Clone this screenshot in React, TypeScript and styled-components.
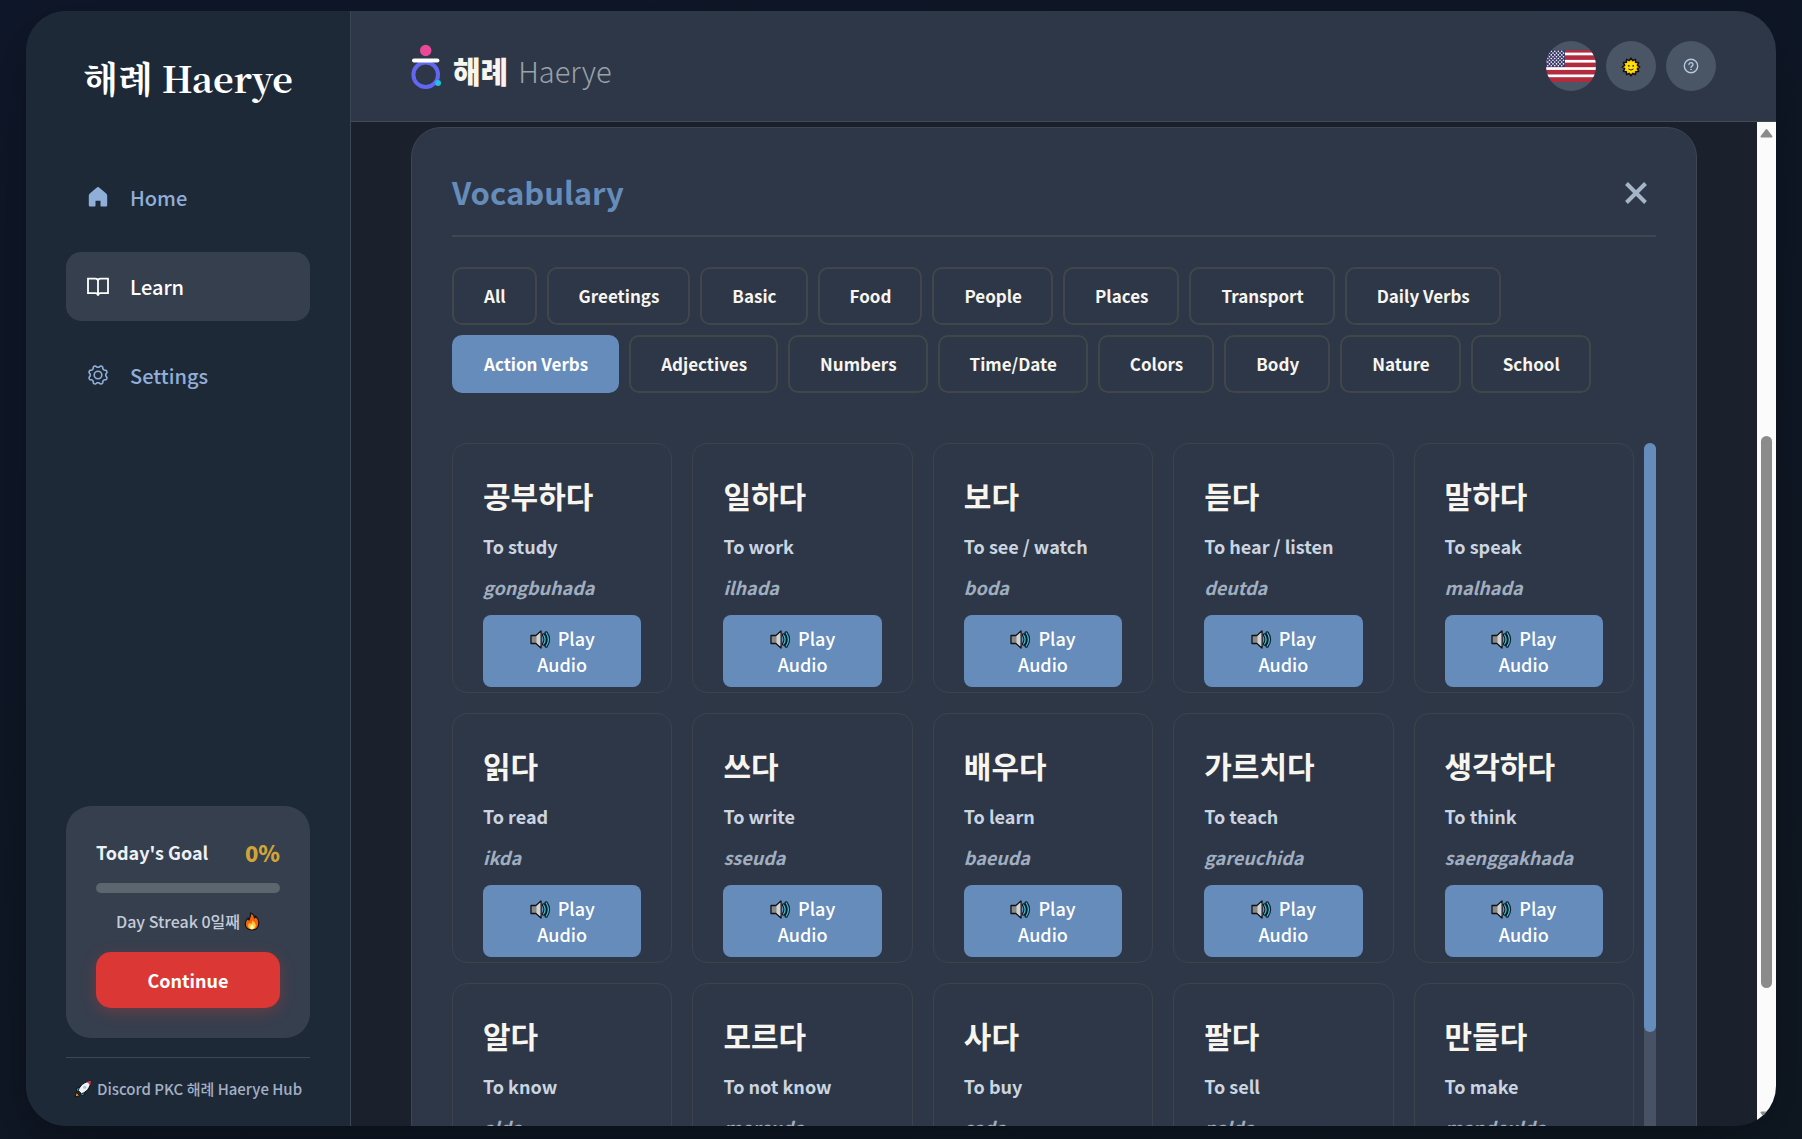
import React, { useState } from "react";
import styled, { createGlobalStyle, css } from "styled-components";

const GlobalStyle = createGlobalStyle`
  *, *::before, *::after { box-sizing: border-box; }
  body {
    margin: 0;
    color: #f7f5ee;
    background: linear-gradient(160deg, #0f172a 0%, #0f1822 100%);
    font-family: "Noto Sans CJK KR", "Noto Sans", sans-serif;
    font-size: 18px;
    line-height: 26px;
  }
  button { font-family: inherit; cursor: pointer; border: 0; margin: 0; padding: 0; }
  h1, h2, h3, p, ul { margin: 0; padding: 0; }
`;

const Stage = styled.div`
  height: 100vh;
  padding: 11px 26px 13px;
`;

const Shell = styled.div`
  display: flex;
  height: 100%;
  overflow: hidden;
  border-radius: 40px;
  background: #1a202c;
  box-shadow: 0 20px 60px rgba(0, 0, 0, 0.3);
`;

/* ---------- Sidebar ---------- */

const Sidebar = styled.aside`
  display: flex;
  flex-direction: column;
  flex: 0 0 325px;
  padding: 40px 40px 24px;
  background: #1e2938;
  border-right: 1px solid #3b4553;
`;

const Brand = styled.h1`
  color: #fff;
  font-family: "Noto Serif CJK KR", "Liberation Serif", serif;
  font-size: 36px;
  font-weight: 700;
  line-height: 54px;
  text-align: center;
  white-space: nowrap;
`;

const Nav = styled.nav`
  display: flex;
  flex-direction: column;
  gap: 20px;
  margin-top: 58px;
`;

const NavLink = styled.a<{ $active?: boolean }>`
  display: flex;
  align-items: center;
  gap: 20px;
  height: 69px;
  padding: 0 20px;
  border-radius: 15px;
  color: ${(p) => (p.$active ? "#fff" : "#90afd8")};
  background: ${(p) => (p.$active ? "#363f4e" : "transparent")};
  font-size: 20px;
  font-weight: 500;
  text-decoration: none;
`;

const GoalCard = styled.section`
  display: flex;
  flex-direction: column;
  margin-top: auto;
  padding: 30px;
  border-radius: 25px;
  background: #363f4e;
`;

const GoalHead = styled.div`
  display: flex;
  align-items: center;
  justify-content: space-between;
  height: 32px;
`;

const GoalTitle = styled.h3`
  color: #edf0f4;
  font-size: 18px;
  font-weight: 700;
`;

const GoalValue = styled.span`
  color: #d2a438;
  font-size: 22px;
  font-weight: 900;
`;

const GoalBar = styled.div`
  height: 10px;
  margin-top: 15px;
  border-radius: 5px;
  background: #5d656f;
`;

const Streak = styled.p`
  display: flex;
  align-items: center;
  justify-content: center;
  gap: 4px;
  margin: 15px 0 18px;
  color: #c3cbd9;
  font-size: 16px;
  font-weight: 500;
`;

const ContinueButton = styled.button`
  height: 56px;
  border-radius: 15px;
  background: #db3735;
  box-shadow: 0 4px 15px rgba(219, 55, 53, 0.3);
  color: #fff;
  font-size: 18px;
  font-weight: 700;
`;

const SidebarFoot = styled.footer`
  margin-top: 19px;
  padding-top: 18px;
  border-top: 1px solid #3f4650;
`;

const FootLink = styled.a`
  display: flex;
  align-items: center;
  justify-content: center;
  gap: 5px;
  color: #a3b0c5;
  font-size: 15px;
  font-weight: 500;
  white-space: nowrap;
  text-decoration: none;
`;

/* ---------- Header ---------- */

const Content = styled.div`
  display: flex;
  flex: 1;
  flex-direction: column;
  min-width: 0;
`;

const Header = styled.header`
  display: flex;
  flex: none;
  align-items: flex-start;
  justify-content: space-between;
  padding: 30px 60px;
  height: 111px;
  border-bottom: 1px solid #434a53;
  background: #2d3748;
`;

const Logo = styled.a`
  display: flex;
  align-items: flex-start;
  gap: 10px;
  color: #f7f5ee;
  line-height: 58px;
  text-decoration: none;
`;

const LogoKorean = styled.span`
  font-size: 30px;
  font-weight: 900;
`;

const LogoLatin = styled.span`
  color: #9aa1a9;
  font-size: 29px;
  font-weight: 300;
`;

const Actions = styled.div`
  display: flex;
  gap: 10px;
`;

const RoundButton = styled.button`
  display: grid;
  place-items: center;
  width: 50px;
  height: 50px;
  overflow: hidden;
  border-radius: 50%;
  background: #4a5565;
  color: #b4c8de;
`;

/* ---------- Page ---------- */

const Scroller = styled.div`
  display: flex;
  flex: 1;
  min-height: 0;
`;

const Page = styled.main`
  flex: 1;
  min-width: 0;
  overflow: hidden;
  padding: 5px 60px 0;
`;

const Panel = styled.section`
  padding: 40px;
  border: 1px solid #3f464f;
  border-radius: 30px;
  background: #2d3748;
`;

const PanelHead = styled.div`
  display: flex;
  align-items: flex-end;
  justify-content: space-between;
  padding: 0 8px 20px 0;
  border-bottom: 2px solid #41474e;
`;

const PanelTitle = styled.h2`
  color: #668cbb;
  font-size: 31px;
  font-weight: 700;
  line-height: 47px;
`;

const CloseButton = styled.button`
  display: grid;
  place-items: center;
  width: 24px;
  height: 44px;
  background: none;
  color: #a5b4c6;
`;

const Tabs = styled.div`
  display: flex;
  flex-wrap: wrap;
  gap: 10px;
  margin-top: 30px;
`;

const Tab = styled.button<{ $active?: boolean }>`
  padding: 15px 29px 15px 30px;
  border: 2px solid #40464a;
  border-radius: 10px;
  background: transparent;
  color: #f7f5ee;
  font-size: 17px;
  font-weight: 700;
  line-height: 24px;
  ${(p) =>
    p.$active &&
    css`
      border-color: #668cbb;
      background: #668cbb;
      color: #fff;
    `}
`;

const WordArea = styled.div`
  display: flex;
  gap: 10px;
  height: 800px;
  margin-top: 50px;
`;

const WordGrid = styled.div`
  display: grid;
  flex: 1;
  grid-template-columns: repeat(auto-fill, minmax(210px, 1fr));
  grid-auto-rows: 250px;
  gap: 20px;
  min-width: 0;
  overflow: hidden;
`;

const Word = styled.article`
  display: flex;
  flex-direction: column;
  gap: 15px;
  padding: 30px;
  border: 1px solid #3c444a;
  border-radius: 15px;
  min-width: 0;
`;

const Hangul = styled.h3`
  margin-bottom: 2px;
  font-size: 30px;
  font-weight: 700;
  line-height: 42px;
`;

const Meaning = styled.p`
  color: #cbd5e0;
  font-weight: 600;
`;

const Romanized = styled.p`
  color: #a0aec0;
  font-style: italic;
  font-weight: 600;
`;

const PlayButton = styled.button`
  flex: none;
  height: 72px;
  padding: 10px 30px;
  border-radius: 8px;
  background: #668cbb;
  color: #fff;
  font-size: 18px;
  font-weight: 500;
  line-height: 26px;
  svg { margin-right: 3px; vertical-align: -3px; }
`;

const InnerTrack = styled.div`
  width: 12px;
  border-radius: 6px;
  background: #475364;
`;

const InnerThumb = styled.div`
  height: 589px;
  border-radius: 6px;
  background: #668cbb;
`;

const OuterTrack = styled.div`
  display: flex;
  flex: none;
  flex-direction: column;
  align-items: center;
  width: 19px;
  padding: 6px 0 5px;
  background: #fbfbfb;
`;

const OuterThumb = styled.div`
  width: 11px;
  height: 552px;
  margin: 298px 0 auto;
  border-radius: 6px;
  background: #8b8b8b;
`;

/* ---------- Drawings ---------- */

const HomeIcon = () => (
  <svg width="24" height="24" viewBox="0 0 24 24" fill="currentColor" aria-hidden="true">
    <path d="M11.2 1.300a1.200 1.200 0 0 1 1.600 0l7.400 6.300c.6.5 1 1.200 1 2v9.300c0 1-.6 1.500-1.500 1.500h-4.200c-.6 0-1-.4-1-1v-4.600h-5v4.600c0 .6-.4 1-1 1H4.300c-.9 0-1.500-.5-1.500-1.500v-9.300c0-.8.4-1.500 1-2z" />
  </svg>
);

const BookIcon = () => (
  <svg width="24" height="24" viewBox="0 0 24 24" fill="none" stroke="currentColor" strokeWidth="1.8" aria-hidden="true">
    <path d="M2 3.600h7.500c1.500 0 2.500 1 2.500 2.400 0-1.400 1-2.400 2.500-2.400H22v14.600h-7.500c-1.600 0-2.500.8-2.500 2.600 0-1.800-.9-2.600-2.500-2.600H2zM12 6v14.800" />
  </svg>
);

const GearIcon = () => {
  const points = Array.from({ length: 97 }, (_, i) => {
    const a = (i / 96) * Math.PI * 2;
    const r = 8.6 + 0.9 * Math.tanh(2 * Math.cos(a * 8 + Math.PI));
    return `${(12 + r * Math.sin(a)).toFixed(2)},${(11 + r * Math.cos(a)).toFixed(2)}`;
  }).join(" ");
  return (
    <svg width="24" height="24" viewBox="0 0 24 24" fill="none" stroke="currentColor" strokeWidth="1.600" strokeLinejoin="round" aria-hidden="true">
      <polyline points={points} />
      <circle cx="12" cy="11" r="3.800" />
    </svg>
  );
};

const LogoMark = () => (
  <svg width="32" height="50" viewBox="0 0 32 50" fill="none" aria-hidden="true">
    <circle cx="14.700" cy="9.500" r="5.700" fill="#ec4899" />
    <circle cx="14.700" cy="33.700" r="12.300" stroke="#6366f1" strokeWidth="4" />
    <rect x="1" y="17.600" width="27.400" height="4" rx="2" fill="#fff" />
    <circle cx="27" cy="42" r="3" fill="#22c1dc" />
  </svg>
);

const FlagIcon = () => (
  <svg width="50" height="32" viewBox="0 0 50 32" aria-hidden="true">
    <rect width="50" height="32" fill="#b22c40" />
    {[0, 1, 2, 3].map((i) => (
      <rect key={i} y={2.600 + i * 7.300} width="50" height="2.700" fill="#fff" />
    ))}
    <rect width="19" height="17" fill="#3c3b6e" />
    {Array.from({ length: 45 }, (_, i) => {
      const row = Math.floor(i / 5);
      const col = i % 5;
      return <circle key={i} cx={1.800 + col * 3.500 + (row % 2) * 1.700} cy={1.300 + row * 1.800} r="0.800" fill="#fff" />;
    })}
  </svg>
);

const SunIcon = () => {
  const points = Array.from({ length: 24 }, (_, i) => {
    const a = (i / 24) * Math.PI * 2;
    const r = i % 2 ? 6.600 : 8.800;
    return `${(10 + r * Math.sin(a)).toFixed(2)},${(11 + r * Math.cos(a)).toFixed(2)}`;
  }).join(" ");
  return (
    <svg width="20" height="20" viewBox="0 0 20 20" overflow="visible" aria-hidden="true">
      <polygon points={points} fill="#ffc800" stroke="#111" strokeWidth="1.500" strokeLinejoin="round" />
      <circle cx="10" cy="11" r="5.400" fill="#ffe000" />
      <circle cx="7.800" cy="9.800" r="0.900" fill="#222" />
      <circle cx="12.200" cy="9.800" r="0.900" fill="#222" />
      <path d="M7.500 13q2.500 2.200 5 0" stroke="#222" fill="none" />
    </svg>
  );
};

const HelpIcon = () => (
  <svg width="16" height="16" viewBox="0 0 16 16" fill="none" stroke="currentColor" strokeWidth="1.400" strokeLinecap="round" aria-hidden="true">
    <circle cx="8" cy="8" r="6.700" />
    <path d="M6 6.500a2 1.900 0 1 1 3 1.700c-.7.4-1 .6-1 1.200" />
    <circle cx="8" cy="11.500" r="0.500" fill="currentColor" strokeWidth="0.600" />
  </svg>
);

const CloseIcon = () => (
  <svg width="24" height="24" viewBox="0 0 24 24" stroke="currentColor" strokeWidth="4" aria-hidden="true">
    <path d="M2.500 2.500l19 19M21.500 2.500l-19 19" />
  </svg>
);

const SpeakerIcon = () => (
  <svg width="21" height="19" viewBox="0 0 21 19" fill="none" strokeLinejoin="round" strokeLinecap="round" aria-hidden="true">
    <path d="M13.600 5q3 4.500 0 9M16.200 3q4.400 6.500 0 13" stroke="#10161c" strokeWidth="3.400" />
    <path d="M13.600 5q3 4.500 0 9M16.200 3q4.400 6.500 0 13" stroke="#35c3dc" strokeWidth="1.300" />
    <path d="M1 5.500h5L11 1v17l-5-4.500H1z" fill="#8a8a8a" stroke="#111" strokeWidth="1.300" />
    <path d="M6.500 6L10.400 2.400v14.200L6.500 13z" fill="#d3d3d3" />
  </svg>
);

const FireIcon = () => (
  <svg width="16" height="19" viewBox="0 0 16 19" aria-hidden="true">
    <path d="M6.500 1c2.500 1 4 3 3.900 5 .8-.2 1.200-1 1.300-1.900 2 2 3.100 4.400 3.100 7 0 4-2.700 6.900-6.800 6.900S1.200 15.300 1.200 11.600c0-2.300 1.100-4 2.900-5.600.1 1 .4 1.600 1 2C5.500 5.500 7.200 3.500 6.500 1z" fill="#f7630c" stroke="#111" strokeWidth="1.200" strokeLinejoin="round" />
    <path d="M8.500 8.500c2 1.600 3.200 3 3.200 5 0 2.200-1.500 3.800-3.700 3.800s-3.800-1.400-3.800-3.500c0-1.400.6-2.400 1.600-3.300.2.900.6 1.300 1.200 1.500.6-1 1.200-2 1.500-3.500z" fill="#ffc83d" />
    <path d="M8 12.500c1.300 1 1.900 1.700 1.900 2.800s-.8 2-1.900 2-1.900-.8-1.900-1.900c0-1.200.9-1.600 1.900-2.900z" fill="#fff3a0" />
  </svg>
);

const RocketIcon = () => (
  <svg width="18" height="18" viewBox="0 0 18 18" strokeLinejoin="round" aria-hidden="true">
    <path d="M1 17l1.300-4.600L5.600 15.700z" fill="#f7931e" stroke="#111" />
    <path d="M5.800 6.800L2 9l1.200 2.600 3-.6zM11.200 12.200L9 16l-2.600-1.200.6-3z" fill="#1ba6c4" stroke="#111" />
    <path d="M4.200 10.500C6 5.500 10 1.800 16.900 1.100 16.200 8 12.500 12 7.500 13.800z" fill="#eef2f5" stroke="#111" />
    <path d="M13 1.900c1.200-.4 2.500-.7 3.900-.8-.1 1.400-.4 2.700-.8 3.900z" fill="#e23b4e" />
    <circle cx="10.800" cy="7.200" r="1.500" fill="#9ec7d8" />
  </svg>
);

const ArrowIcon = ({ down }: { down?: boolean }) => (
  <svg width="13" height="10" viewBox="0 0 13 10" fill="#8b8b8b" stroke="#8b8b8b" strokeWidth="2" strokeLinejoin="round" aria-hidden="true">
    <path d={down ? "M1.500 1.500h10L6.500 8z" : "M1.500 8.500h10L6.500 2z"} />
  </svg>
);

/* ---------- Data ---------- */

const categories = [
  "All", "Greetings", "Basic", "Food", "People", "Places", "Transport", "Daily Verbs",
  "Action Verbs", "Adjectives", "Numbers", "Time/Date", "Colors", "Body", "Nature", "School",
];

const words = [
  ["공부하다", "To study", "gongbuhada"],
  ["일하다", "To work", "ilhada"],
  ["보다", "To see / watch", "boda"],
  ["듣다", "To hear / listen", "deutda"],
  ["말하다", "To speak", "malhada"],
  ["읽다", "To read", "ikda"],
  ["쓰다", "To write", "sseuda"],
  ["배우다", "To learn", "baeuda"],
  ["가르치다", "To teach", "gareuchida"],
  ["생각하다", "To think", "saenggakhada"],
  ["알다", "To know", "alda"],
  ["모르다", "To not know", "moreuda"],
  ["사다", "To buy", "sada"],
  ["팔다", "To sell", "palda"],
  ["만들다", "To make", "mandeulda"],
];

export default function App() {
  const [category, setCategory] = useState("Action Verbs");
  return (
    <Stage>
      <GlobalStyle />
      <Shell>
        <Sidebar>
          <Brand>해례 Haerye</Brand>
          <Nav>
            <NavLink href="#home"><HomeIcon />Home</NavLink>
            <NavLink href="#learn" $active><BookIcon />Learn</NavLink>
            <NavLink href="#settings"><GearIcon />Settings</NavLink>
          </Nav>
          <GoalCard>
            <GoalHead>
              <GoalTitle>Today's Goal</GoalTitle>
              <GoalValue>0%</GoalValue>
            </GoalHead>
            <GoalBar role="progressbar" aria-label="Today's Goal" aria-valuenow={0} />
            <Streak>Day Streak 0일째<FireIcon /></Streak>
            <ContinueButton>Continue</ContinueButton>
          </GoalCard>
          <SidebarFoot>
            <FootLink href="#discord"><RocketIcon />Discord PKC 해례 Haerye Hub</FootLink>
          </SidebarFoot>
        </Sidebar>
        <Content>
          <Header>
            <Logo href="#home">
              <LogoMark />
              <LogoKorean>해례</LogoKorean>
              <LogoLatin>Haerye</LogoLatin>
            </Logo>
            <Actions>
              <RoundButton aria-label="Language"><FlagIcon /></RoundButton>
              <RoundButton aria-label="Theme"><SunIcon /></RoundButton>
              <RoundButton aria-label="Help"><HelpIcon /></RoundButton>
            </Actions>
          </Header>
          <Scroller>
            <Page>
              <Panel>
                <PanelHead>
                  <PanelTitle>Vocabulary</PanelTitle>
                  <CloseButton aria-label="Close"><CloseIcon /></CloseButton>
                </PanelHead>
                <Tabs>
                  {categories.map((name) => (
                    <Tab key={name} $active={name === category} onClick={() => setCategory(name)}>
                      {name}
                    </Tab>
                  ))}
                </Tabs>
                <WordArea>
                  <WordGrid>
                    {words.map(([hangul, meaning, roman]) => (
                      <Word key={hangul}>
                        <Hangul>{hangul}</Hangul>
                        <Meaning>{meaning}</Meaning>
                        <Romanized>{roman}</Romanized>
                        <PlayButton><SpeakerIcon /> Play Audio</PlayButton>
                      </Word>
                    ))}
                  </WordGrid>
                  <InnerTrack><InnerThumb /></InnerTrack>
                </WordArea>
              </Panel>
            </Page>
            <OuterTrack>
              <ArrowIcon />
              <OuterThumb />
              <ArrowIcon down />
            </OuterTrack>
          </Scroller>
        </Content>
      </Shell>
    </Stage>
  );
}
